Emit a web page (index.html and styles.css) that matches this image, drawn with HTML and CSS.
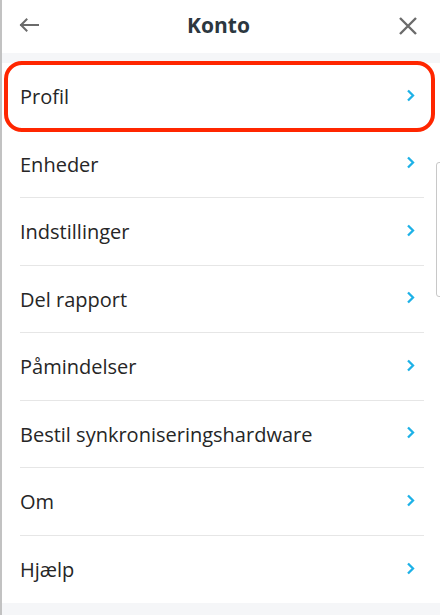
FILE: index.html
```html
<!DOCTYPE html>
<html lang="da">
<head>
<meta charset="utf-8">
<title>Konto</title>
<link rel="stylesheet" href="styles.css">
</head>
<body>
<div class="app">
  <header class="header">
    <button class="icon-btn back" aria-label="Tilbage">
      <svg width="20" height="14" viewBox="0 0 20 14"><path d="M19 7H2M7.5 1.5L2 7l5.5 5.5" fill="none" stroke="#6b6b6b" stroke-width="2" stroke-linecap="square"/></svg>
    </button>
    <h1 class="title">Konto</h1>
    <button class="icon-btn close" aria-label="Luk">
      <svg width="20" height="20" viewBox="0 0 20 20"><path d="M2 2L18 18M18 2L2 18" fill="none" stroke="#6b6b6b" stroke-width="2.4"/></svg>
    </button>
  </header>
  <ul class="menu">
    <li class="item"><span class="label">Profil</span><span class="chev"><svg width="9" height="13" viewBox="0 0 9 13"><path d="M2 1.5L7 6.5L2 11.5" fill="none" stroke="#1db1e7" stroke-width="2.3"/></svg></span></li>
    <li class="item"><span class="label">Enheder</span><span class="chev"><svg width="9" height="13" viewBox="0 0 9 13"><path d="M2 1.5L7 6.5L2 11.5" fill="none" stroke="#1db1e7" stroke-width="2.3"/></svg></span></li>
    <li class="item"><span class="label">Indstillinger</span><span class="chev"><svg width="9" height="13" viewBox="0 0 9 13"><path d="M2 1.5L7 6.5L2 11.5" fill="none" stroke="#1db1e7" stroke-width="2.3"/></svg></span></li>
    <li class="item"><span class="label">Del rapport</span><span class="chev"><svg width="9" height="13" viewBox="0 0 9 13"><path d="M2 1.5L7 6.5L2 11.5" fill="none" stroke="#1db1e7" stroke-width="2.3"/></svg></span></li>
    <li class="item"><span class="label">Påmindelser</span><span class="chev"><svg width="9" height="13" viewBox="0 0 9 13"><path d="M2 1.5L7 6.5L2 11.5" fill="none" stroke="#1db1e7" stroke-width="2.3"/></svg></span></li>
    <li class="item"><span class="label">Bestil synkroniseringshardware</span><span class="chev"><svg width="9" height="13" viewBox="0 0 9 13"><path d="M2 1.5L7 6.5L2 11.5" fill="none" stroke="#1db1e7" stroke-width="2.3"/></svg></span></li>
    <li class="item"><span class="label">Om</span><span class="chev"><svg width="9" height="13" viewBox="0 0 9 13"><path d="M2 1.5L7 6.5L2 11.5" fill="none" stroke="#1db1e7" stroke-width="2.3"/></svg></span></li>
    <li class="item last"><span class="label">Hjælp</span><span class="chev"><svg width="9" height="13" viewBox="0 0 9 13"><path d="M2 1.5L7 6.5L2 11.5" fill="none" stroke="#1db1e7" stroke-width="2.3"/></svg></span></li>
  </ul>
  <div class="highlight"></div>
  <div class="edge-tab"></div>
</div>
</body>
</html>
```
FILE: styles.css
```css
* { box-sizing: border-box; }
html, body { margin: 0; padding: 0; }
body {
  width: 440px;
  height: 615px;
  overflow: hidden;
  background: #f5f6f8;
  font-family: "Open Sans", "Noto Sans", sans-serif;
}
.app {
  position: relative;
  height: 615px;
  border-left: 2px solid #c2c2c2;
}
.header {
  height: 53px;
  background: #fff;
  display: flex;
  align-items: center;
  justify-content: space-between;
  padding: 0 22px 0 17px;
}
.icon-btn {
  border: 0;
  background: none;
  padding: 0;
  display: flex;
  align-items: center;
  justify-content: center;
}
.back { margin-top: -4px; }
.close { margin-top: -2px; }
.title {
  margin: 0;
  font-size: 21px;
  font-weight: 700;
  color: #2c3740;
  margin-top: -4px;
}
.menu {
  list-style: none;
  margin: 10px 0 0;
  padding: 0;
  background: #fff;
}
.item {
  height: 67.5px;
  margin: 0 16px 0 18px;
  border-bottom: 1px solid #e6e6e6;
  display: flex;
  align-items: center;
  justify-content: space-between;
  padding-right: 9px;
}
.item.last { border-bottom: 0; }
.label {
  font-size: 20px;
  color: #262626;
  margin-top: 1px;
}
.chev { display: flex; margin-top: -2px; }
.highlight {
  position: absolute;
  left: 2px;
  top: 61px;
  width: 431px;
  height: 71px;
  border: 4px solid #ff2600;
  border-radius: 18px;
}
.edge-tab {
  position: absolute;
  right: -4px;
  top: 162px;
  width: 8px;
  height: 135px;
  border: 1px solid #c8c8c8;
  border-radius: 3px;
  background: #fff;
}
```
